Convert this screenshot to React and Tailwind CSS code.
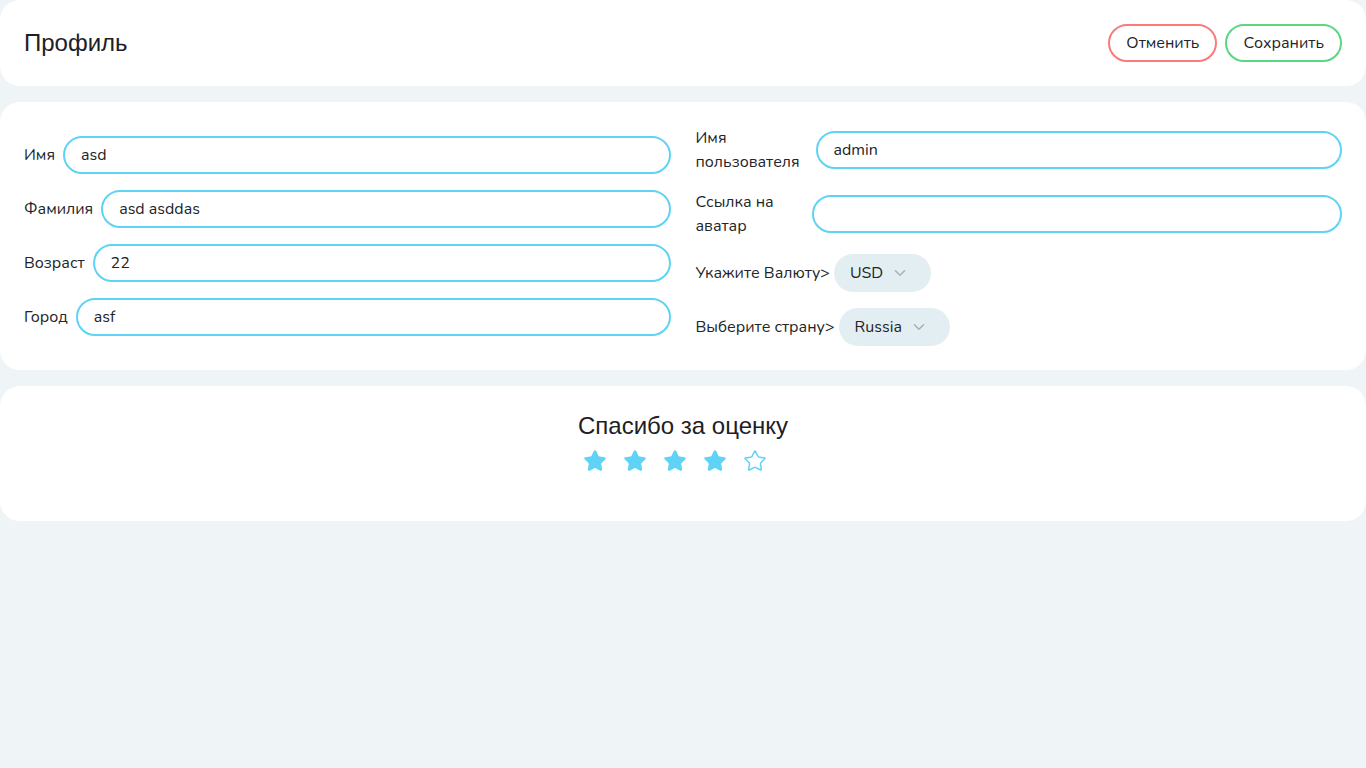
import React, { useState } from 'react';
import { Star, ChevronDown } from 'lucide-react';

const font = { fontFamily: '"Nunito", "Noto Sans", sans-serif' };

function Field({ label, value, labelClass = '' }) {
  return <div className="flex items-center gap-2">
      <label className={`text-[16px] leading-6 text-[#212529] shrink-0 ${labelClass}`}>{label}</label>
      <input type="text" defaultValue={value} className="flex-1 min-w-0 h-[38px] rounded-full border-2 border-[#5fd3f5] px-4 text-[16px] text-[#212529] outline-none bg-white" />
    </div>;
}

function Select({ label, value }) {
  return <div className="flex items-center gap-1 h-[38px]">
      <span className="text-[16px] leading-6 text-[#212529]">{label}</span>
      <div className="h-[38px] rounded-full bg-[#e3eef2] pl-4 pr-[22px] flex items-center gap-2 text-[16px] text-[#212529]">
        <span>{value}</span>
        <ChevronDown className="w-[18px] h-[18px] text-[#a4b1b8]" strokeWidth={2} />
      </div>
    </div>;
}

export default function App() {
  const [rating, setRating] = useState(4);
  return <div className="min-h-screen bg-[#eff4f7] flex flex-col gap-4" style={font}>
      {/* Заголовок */}
      <div className="bg-white rounded-[20px] h-[86px] px-6 flex items-center justify-between">
        <h1 className="text-[24px] text-[#1d2125]" style={{ fontFamily: '"Liberation Sans", Arial, sans-serif' }}>Профиль</h1>
        <div className="flex items-center gap-2">
          <button className="h-[38px] px-4 rounded-full border-2 border-[#fb7a7a] text-[16px] text-[#212529]">Отменить</button>
          <button className="h-[38px] px-4 rounded-full border-2 border-[#5cd680] text-[16px] text-[#212529]">Сохранить</button>
        </div>
      </div>

      {/* Форма */}
      <div className="bg-white rounded-[20px] p-6 grid grid-cols-2 gap-x-[25px] items-center">
        <div className="flex flex-col gap-4">
          <Field label="Имя" value="asd" />
          <Field label="Фамилия" value="asd asddas" />
          <Field label="Возраст" value="22" />
          <Field label="Город" value="asf" />
        </div>
        <div className="flex flex-col gap-4">
          <Field label="Имя пользователя" value="admin" labelClass="w-[112px]" />
          <Field label="Ссылка на аватар" value="" labelClass="w-[108px]" />
          <Select label="Укажите Валюту>" value="USD" />
          <Select label="Выберите страну>" value="Russia" />
        </div>
      </div>

      {/* Оценка */}
      <div className="bg-white rounded-[20px] pt-6 pb-12 flex flex-col items-center">
        <h2 className="text-[24px] leading-[32px] text-[#1d2125]" style={{ fontFamily: '"Liberation Sans", Arial, sans-serif' }}>Спасибо за оценку</h2>
        <div className="flex mt-[7px]">
          {[1, 2, 3, 4, 5].map(i => <button key={i} onClick={() => setRating(i)} className="mr-4">
              <Star className="w-6 h-6 text-[#5fd3f5]" fill={i <= rating ? '#5fd3f5' : 'none'} strokeWidth={1.5} />
            </button>)}
        </div>
      </div>
    </div>;
}
